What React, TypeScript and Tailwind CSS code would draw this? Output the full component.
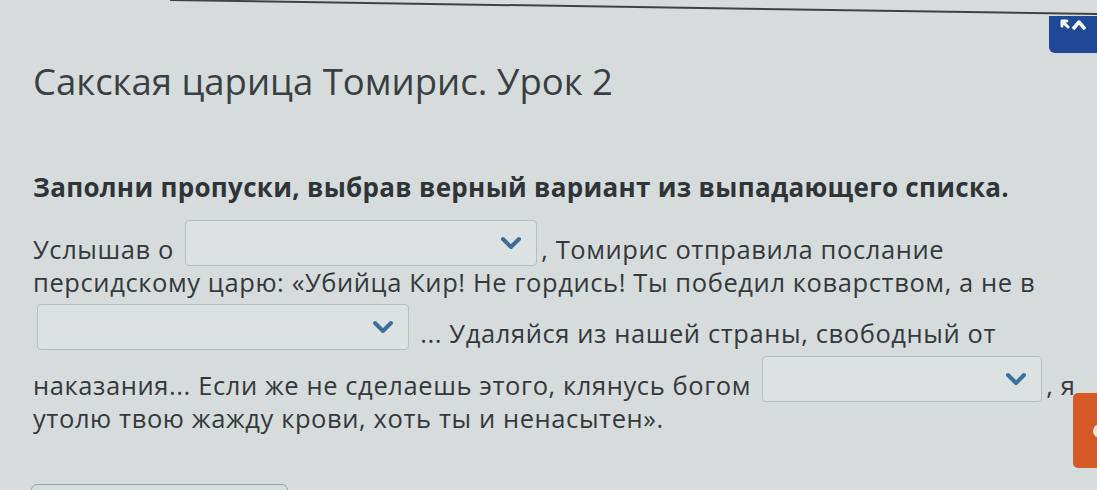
import React from 'react';

const Dropdown: React.FC<{ w: string }> = ({ w }) => (
  <span
    className={`mx-[4px] mt-[6px] inline-flex ${w} h-[46px] items-center justify-end rounded-[4px] border border-[#b6bfbf] bg-[#dce2e1] pr-[14px] align-text-bottom`}
  >
    <svg width="22" height="14" viewBox="0 0 22 14" fill="none">
      <path d="M3 3l8 8 8-8" stroke="#3d6f9c" strokeWidth="4" strokeLinecap="round" strokeLinejoin="round" />
    </svg>
  </span>
);

export default function App() {
  return (
    <div
      className="relative h-[490px] w-[1097px] overflow-hidden bg-[#d6dcdb] text-[#34393d]"
      style={{ fontFamily: '"Open Sans", "Noto Sans", sans-serif' }}
    >
      {/* screen edge */}
      <svg className="absolute left-0 top-0" width="1097" height="20">
        <line x1="170" y1="0" x2="1097" y2="14" stroke="#3c4246" strokeWidth="2" />
      </svg>

      {/* collapse tab */}
      <div className="absolute right-0 top-[16px] flex h-[37px] w-[48px] items-start justify-center rounded-bl-[6px] bg-[#1f4896] pt-[3px]">
        <svg width="26" height="12" viewBox="0 0 26 12" fill="none">
          <path d="M2 2l6 6M2 2h5M2 2v5" stroke="#fff" strokeWidth="3" strokeLinecap="round" />
          <path d="M13 10l6-7 6 7" stroke="#fff" strokeWidth="3.5" strokeLinejoin="round" />
        </svg>
      </div>

      {/* orange side button */}
      <div className="absolute right-0 top-[393px] flex h-[75px] w-[24px] items-center justify-end rounded-l-[5px] bg-[#d65a28]">
        <div className="mr-[-4px] h-[14px] w-[8px] rounded-l-full bg-[#f2e2d2]" />
      </div>

      {/* bottom-left cut button */}
      <div className="absolute left-[31px] top-[484px] h-[20px] w-[257px] rounded-[6px] border border-[#9aa3a3]" />

      <div className="pl-[33px] pr-[10px] pt-[58px]">
        <h1 className="text-[36.5px] leading-[46px] font-normal text-[#3a3f43]">Сакская царица Томирис. Урок 2</h1>

        <p className="mt-[66px] text-[26px] font-bold leading-[34px] tracking-[0.3px] text-[#2f3438]">
          Заполни пропуски, выбрав верный вариант из выпадающего списка.
        </p>

        <div className="mt-[10px] text-[25.5px] leading-[32px] tracking-[0.6px] text-[#34393d]">
          Услышав о <Dropdown w="w-[352px]" />, Томирис отправила послание персидскому царю: «Убийца Кир! Не гордись! Ты
          победил коварством, а не в <Dropdown w="w-[372px]" /> ... Удаляйся из нашей страны, свободный от наказания...
          Если же не сделаешь этого, клянусь богом <Dropdown w="w-[280px]" />, я утолю твою жажду крови, хоть ты и
          ненасытен».
        </div>
      </div>
    </div>
  );
}
